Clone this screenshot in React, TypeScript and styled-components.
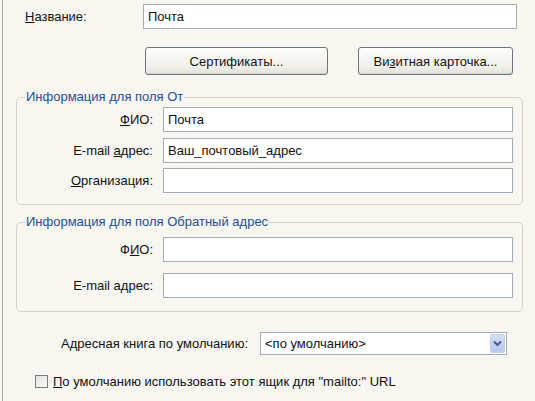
import styled, { createGlobalStyle } from 'styled-components';

const GlobalStyle = createGlobalStyle`
  html, body {
    margin: 0;
    padding: 0;
    background: #f7f6f1;
  }
  body {
    font-family: "Liberation Sans", Arial, sans-serif;
    font-size: 13px;
    color: #111;
  }
`;

const Dialog = styled.div`
  margin-left: 2px;
  border-left: 1px solid #a9a9a4;
  height: 401px;
  box-sizing: border-box;
  padding-top: 4px;
  display: flex;
  flex-direction: column;
`;

const TopRow = styled.div`
  display: grid;
  grid-template-columns: 140px 374px;
  align-items: center;
`;

const Label = styled.label<{ $right?: boolean }>`
  white-space: nowrap;
  text-align: ${(p) => (p.$right ? 'right' : 'left')};
  padding-left: ${(p) => (p.$right ? '0' : '22px')};
`;

const Input = styled.div`
  height: 25px;
  box-sizing: border-box;
  border: 1px solid #a3abb4;
  background: #fff;
  padding: 0 4px;
  display: flex;
  align-items: center;
  white-space: nowrap;
`;

const ButtonRow = styled.div`
  display: flex;
  gap: 30px;
  margin-top: 18px;
  padding-left: 142px;
`;

const Button = styled.button<{ $w: number }>`
  width: ${(p) => p.$w}px;
  height: 28px;
  font: inherit;
  color: #111;
  border: 1px solid #6f747a;
  border-radius: 3px;
  background: linear-gradient(#fdfdfb, #f1f0ea 70%, #e3e1d8);
  box-shadow: inset 0 -1px 0 #d6d4ca;
  padding: 0;
`;

const Group = styled.fieldset<{ $top: number; $pb: number }>`
  margin: ${(p) => p.$top}px 0 0 13px;
  width: 507px;
  box-sizing: border-box;
  border: 1px solid #d3d2c6;
  border-radius: 5px;
  padding: 0 9px ${(p) => p.$pb}px 0;
`;

const Legend = styled.legend`
  color: #1e4f94;
  margin-left: 8px;
  padding: 0 1px;
  line-height: 14px;
`;

const Fields = styled.div<{ $gap: number; $mt: number }>`
  display: grid;
  grid-template-columns: 136px 350px;
  column-gap: 10px;
  row-gap: ${(p) => p.$gap}px;
  margin-top: ${(p) => p.$mt}px;
  align-items: center;
`;

const ComboRow = styled.div`
  display: grid;
  grid-template-columns: 245px 247px;
  column-gap: 12px;
  align-items: center;
  margin-top: 20px;
`;

const Combo = styled.div`
  height: 23px;
  box-sizing: border-box;
  border: 1px solid #a3abb4;
  background: #fff;
  display: flex;
  align-items: center;
  padding: 0 1px 0 4px;
`;

const ComboText = styled.span`
  flex: 1;
`;

const ComboButton = styled.div`
  width: 15px;
  height: 19px;
  border-radius: 2px;
  background: linear-gradient(#d3def6, #b7c8ee);
  border: 1px solid #c4d0ea;
  box-sizing: border-box;
  display: flex;
  align-items: center;
  justify-content: center;
`;

const CheckRow = styled.label`
  display: flex;
  align-items: center;
  gap: 5px;
  margin-top: 19px;
  padding-left: 32px;
`;

const Box = styled.span`
  width: 13px;
  height: 13px;
  box-sizing: border-box;
  border: 1px solid #7a7c80;
  background: linear-gradient(135deg, #e4e3dc, #fbfbf8);
`;

export default function App() {
  return (
    <>
      <GlobalStyle />
      <Dialog>
        <TopRow>
          <Label>
            <u>Н</u>азвание:
          </Label>
          <Input>Почта</Input>
        </TopRow>
        <ButtonRow>
          <Button $w={183}>Сертификаты...</Button>
          <Button $w={155}>
            Ви<u>з</u>итная карточка...
          </Button>
        </ButtonRow>

        <Group $top={15} $pb={11}>
          <Legend>Информация для поля От</Legend>
          <Fields $gap={5.5} $mt={3}>
            <Label $right>
              <u>Ф</u>ИО:
            </Label>
            <Input>Почта</Input>
            <Label $right>
              E-mail <u>а</u>дрес:
            </Label>
            <Input>Ваш_почтовый_адрес</Input>
            <Label $right>
              <u>О</u>рганизация:
            </Label>
            <Input />
          </Fields>
        </Group>

        <Group $top={10} $pb={13}>
          <Legend>Информация для поля Обратный адрес</Legend>
          <Fields $gap={11} $mt={8}>
            <Label $right>
              Ф<u>И</u>О:
            </Label>
            <Input />
            <Label $right>
              E-mail а<u>д</u>рес:
            </Label>
            <Input />
          </Fields>
        </Group>

        <ComboRow>
          <Label $right>Адресная книга по умолчанию:</Label>
          <Combo>
            <ComboText>&lt;по умолчанию&gt;</ComboText>
            <ComboButton>
              <svg width="9" height="7" viewBox="0 0 9 7">
                <path d="M1 1.5 L4.5 5 L8 1.5" fill="none" stroke="#3d5a99" strokeWidth="2" />
              </svg>
            </ComboButton>
          </Combo>
        </ComboRow>

        <CheckRow>
          <Box />
          <span>
            <u>П</u>о умолчанию использовать этот ящик для "mailto:" URL
          </span>
        </CheckRow>
      </Dialog>
    </>
  );
}
